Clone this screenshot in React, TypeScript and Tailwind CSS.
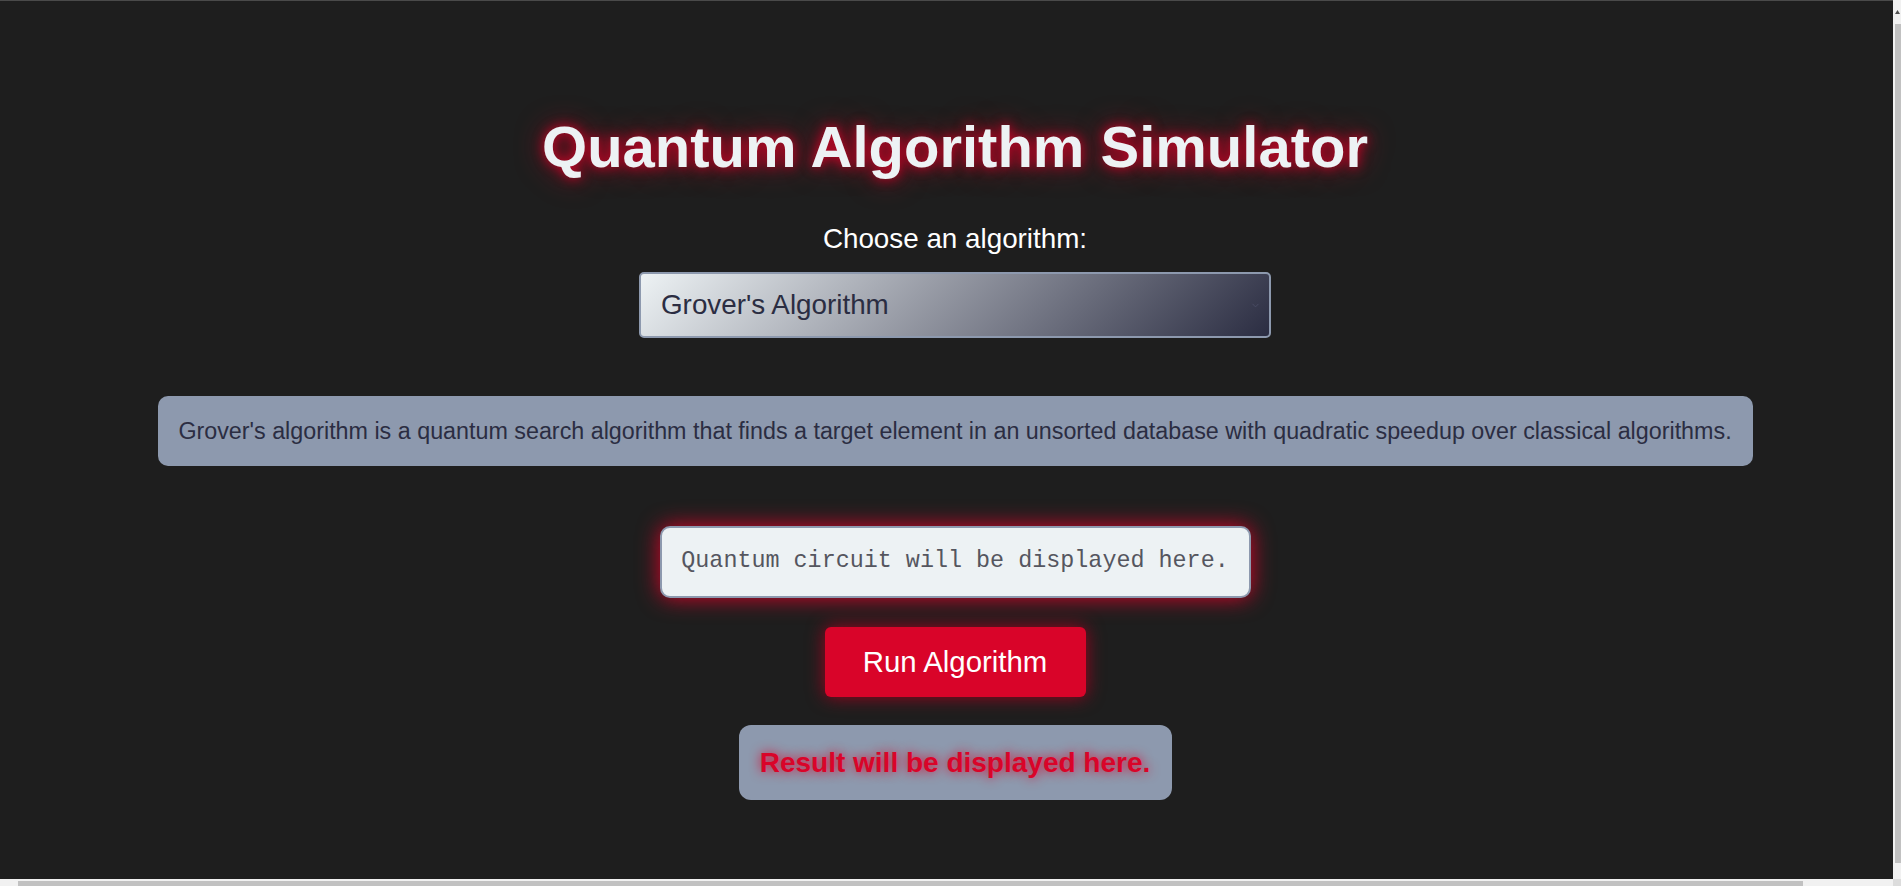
import { useState } from 'react'
import { ChevronDown } from 'lucide-react'

const descriptions: Record<string, string> = {
  grover:
    "Grover's algorithm is a quantum search algorithm that finds a target element in an unsorted database with quadratic speedup over classical algorithms.",
  shor: "Shor's algorithm is a quantum algorithm for integer factorization that runs in polynomial time.",
  deutsch: 'The Deutsch-Jozsa algorithm determines whether a function is constant or balanced with a single query.',
}

function ScrollbarV() {
  return (
    <div className="w-[8px] h-full bg-[#f1f1f1] flex flex-col">
      <div className="h-[24px] flex items-center justify-end pr-[1px]">
        <svg width="5" height="4" viewBox="0 0 5 4">
          <path d="M2.5 0 L5 4 L0 4 Z" fill="#505050" />
        </svg>
      </div>
      <div className="flex-1 pl-[2px] pb-[2px]">
        <div className="h-full bg-[#c1c1c1]" />
      </div>
      <div className="h-[14px]" />
    </div>
  )
}

export default function App() {
  const [algo, setAlgo] = useState('grover')

  return (
    <div className="w-[1901px] h-[886px] flex flex-col overflow-hidden bg-[#1e1e1e] font-['Liberation_Sans',Arial,sans-serif]">
      <div className="flex h-[879px]">
        <div className="flex-1 overflow-hidden border-t border-[#4a4a4a]">
          <div className="w-[1910px] flex flex-col items-center">
            <h1 className="mt-[112px] text-[58px] leading-[67px] font-bold text-[#edf2f4] [text-shadow:0_0_12px_#d90429,0_0_28px_#a0031f]">
              Quantum Algorithm Simulator
            </h1>

            <label
              htmlFor="algorithm"
              className="mt-[43px] text-[27.8px] leading-[32px] text-white"
            >
              Choose an algorithm:
            </label>

            <div className="relative mt-[17px]">
              <select
                id="algorithm"
                value={algo}
                onChange={(e) => setAlgo(e.target.value)}
                className="appearance-none w-[632px] h-[66px] pl-[20px] pr-10 rounded-[5px] border-2 border-[#8d99ae] bg-[linear-gradient(135deg,#edf2f4,#2b2d42)] text-[27.8px] text-[#2b2d42] outline-none"
              >
                <option value="grover">Grover's Algorithm</option>
                <option value="shor">Shor's Algorithm</option>
                <option value="deutsch">Deutsch-Jozsa Algorithm</option>
              </select>
              <ChevronDown
                className="absolute right-[10px] top-[28px] w-[11px] h-[11px] text-[#4a4d66] pointer-events-none"
                strokeWidth={2}
              />
            </div>

            <div className="mt-[58px] w-[1595px] h-[70px] flex items-center justify-center rounded-[10px] bg-[#8d99ae] text-[23.3px] text-[#2b2d42]">
              {descriptions[algo]}
            </div>

            <div className="mt-[60px] w-[591px] h-[72px] flex items-center justify-center rounded-[10px] border-2 border-[#8d99ae] bg-[#edf2f4] shadow-[0_0_22px_#d90429] font-['Liberation_Mono','Courier_New',monospace] text-[23.4px] text-[#55565f]">
              Quantum circuit will be displayed here.
            </div>

            <button className="mt-[29px] w-[261px] h-[70px] rounded-[6px] bg-[#d90429] text-white text-[29.4px] shadow-[0_0_18px_#a0031f]">
              Run Algorithm
            </button>

            <div className="mt-[28px] w-[433px] h-[75px] flex items-center justify-center rounded-[12px] bg-[#8d99ae] text-[28px] font-bold text-[#d90429] [text-shadow:0_0_12px_#d90429]">
              Result will be displayed here.
            </div>
          </div>
        </div>
        <ScrollbarV />
      </div>
      <div className="flex h-[7px]">
        <div className="flex-1 bg-[#f1f1f1] pl-[18px] pt-[2px] pr-[90px]">
          <div className="h-full bg-[#c1c1c1]" />
        </div>
        <div className="w-[8px] bg-[#dcdcdc]" />
      </div>
    </div>
  )
}
